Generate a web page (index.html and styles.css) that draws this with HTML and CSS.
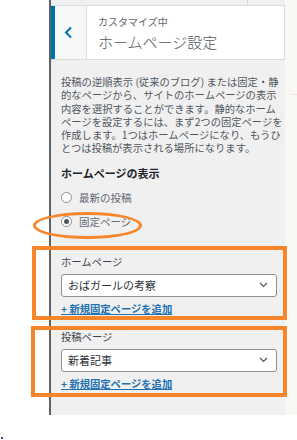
FILE: index.html
```html
<!DOCTYPE html>
<html lang="ja">
<head>
  <meta charset="UTF-8">
  <title>カスタマイズ - ホームページ設定</title>
  <link rel="stylesheet" href="styles.css">
</head>
<body>
  <div class="screen">
    <div class="gutter"></div>

    <div class="panel">
      <div class="topbar"><span class="topbar-sep"></span></div>

      <div class="header">
        <button class="back" aria-label="戻る">
          <svg width="9" height="13" viewBox="0 0 9 13"><path d="M7 1.5 L2 6.5 L7 11.5" fill="none" stroke="#0073aa" stroke-width="2"/></svg>
        </button>
        <div class="title-box">
          <div class="title-sub">カスタマイズ中</div>
          <div class="title-main">ホームページ設定</div>
        </div>
      </div>

      <div class="body">
        <p class="desc">投稿の逆順表示 (従来のブログ) または固定・静<br>的なページから、サイトのホームページの表示<br>内容を選択することができます。静的なホーム<br>ページを設定するには、まず2つの固定ページを<br>作成します。1つはホームページになり、もうひ<br>とつは投稿が表示される場所になります。</p>

        <div class="section-title">ホームページの表示</div>
        <label class="radio-row"><span class="radio"></span>最新の投稿</label>
        <label class="radio-row"><span class="radio checked"></span>固定ページ</label>

        <div class="field first">
          <div class="field-label">ホームページ</div>
          <div class="select">
            <span>おばガールの考察</span>
            <svg width="9" height="6" viewBox="0 0 9 6"><path d="M1 1 L4.5 4.5 L8 1" fill="none" stroke="#50575e" stroke-width="1.2"/></svg>
          </div>
          <a class="add-link" href="#">+ 新規固定ページを追加</a>
        </div>

        <div class="field">
          <div class="field-label">投稿ページ</div>
          <div class="select">
            <span>新着記事</span>
            <svg width="9" height="6" viewBox="0 0 9 6"><path d="M1 1 L4.5 4.5 L8 1" fill="none" stroke="#50575e" stroke-width="1.2"/></svg>
          </div>
          <a class="add-link" href="#">+ 新規固定ページを追加</a>
        </div>
      </div>
    </div>

    <div class="preview"><div class="preview-line"></div></div>
  </div>

  <div class="foot"><span class="foot-dot"></span></div>

  <!-- annotations drawn over the screenshot -->
  <div class="mark ellipse"></div>
  <div class="mark box box-home"></div>
  <div class="mark box box-posts"></div>
</body>
</html>
```

FILE: styles.css
```css
body {
  width: 297px;
  height: 440px;
  margin: 0;
  padding: 0;
  position: relative;
  background: #fff;
  font-family: "Noto Sans CJK JP", "Noto Sans", sans-serif;
  color: #2c3338;
  overflow: hidden;
}

.screen {
  display: flex;
  height: 415px;
}

.gutter {
  width: 49px;
  background: #fff;
}

.panel {
  width: 234px;
  border-left: 2px solid #5f6368;
  background: #f0f0f1;
  display: flex;
  flex-direction: column;
}

.topbar {
  height: 5px;
  border-bottom: 1px solid #dcdcde;
  display: flex;
}

.topbar-sep {
  margin-left: 196px;
  border-left: 1px solid #dcdcde;
}

.header {
  height: 53px;
  display: flex;
  border-bottom: 1px solid #dcdcde;
}

.back {
  width: 36px;
  padding: 0 0 0 6px;
  margin: 0;
  border: none;
  border-left: 4px solid #0073aa;
  border-right: 1px solid #dcdcde;
  background: #f6f7f7;
  display: flex;
  align-items: center;
  justify-content: flex-start;
  padding-left: 9px;
}

.title-box {
  flex: 1;
  background: #fff;
  border-right: 1px solid #dcdcde;
  padding: 9px 0 0 11px;
}

.title-sub {
  font-size: 10px;
  line-height: 14px;
  color: #646970;
}

.title-main {
  font-size: 15px;
  line-height: 22px;
  margin-top: 2px;
  color: #50575e;
  font-weight: 300;
}

.body {
  padding: 15px 8px 0 10px;
}

.desc {
  margin: 0;
  font-size: 10.3px;
  line-height: 13.3px;
  color: #50575e;
  white-space: nowrap;
}

.section-title {
  margin-top: 11px;
  font-size: 11px;
  line-height: 14px;
  font-weight: 600;
  color: #1d2327;
}

.radio-row {
  display: flex;
  align-items: center;
  gap: 7px;
  height: 24px;
  font-size: 10.5px;
  color: #646970;
}

.section-title + .radio-row {
  margin-top: 6px;
}

.radio {
  width: 9px;
  height: 9px;
  border: 1px solid #8c8f94;
  border-radius: 50%;
  background: #fff;
  display: flex;
  align-items: center;
  justify-content: center;
}

.radio.checked::after {
  content: '';
  width: 5px;
  height: 5px;
  border-radius: 50%;
  background: #50575e;
}

.field {
  margin-top: 14px;
}

.field.first {
  margin-top: 21px;
}

.field-label {
  font-size: 10.3px;
  line-height: 14px;
  color: #3c434a;
  margin-bottom: 5px;
}

.select {
  height: 21px;
  border: 1px solid #8c8f94;
  border-radius: 3px;
  background: #fff;
  display: flex;
  align-items: center;
  justify-content: space-between;
  padding: 0 8px 0 6px;
  font-size: 11px;
  color: #2c3338;
}

.add-link {
  display: block;
  margin-top: 5px;
  font-size: 10.3px;
  line-height: 14px;
  font-weight: 600;
  color: #2271b1;
  text-decoration: underline;
}

.preview {
  flex: 1;
  background: #faf8f5;
}

.preview-line {
  margin: 94px 0 0 5px;
  height: 1px;
  background: #ebe8e3;
}

.foot {
  padding: 22px 0 0 1px;
}

.foot-dot {
  display: block;
  width: 2px;
  height: 2px;
  background: #3d3d8f;
}

/* orange hand-drawn marks */
.mark {
  position: absolute;
  border-style: solid;
  border-color: #f7862b;
  box-sizing: border-box;
}

.ellipse {
  left: 33px;
  top: 212px;
  width: 109px;
  height: 27px;
  border-width: 3px;
  border-radius: 50%;
}

.box {
  border-width: 4px;
}

.box-home {
  left: 32px;
  top: 246px;
  width: 255px;
  height: 74px;
}

.box-posts {
  left: 31px;
  top: 326px;
  width: 256px;
  height: 71px;
}
```
